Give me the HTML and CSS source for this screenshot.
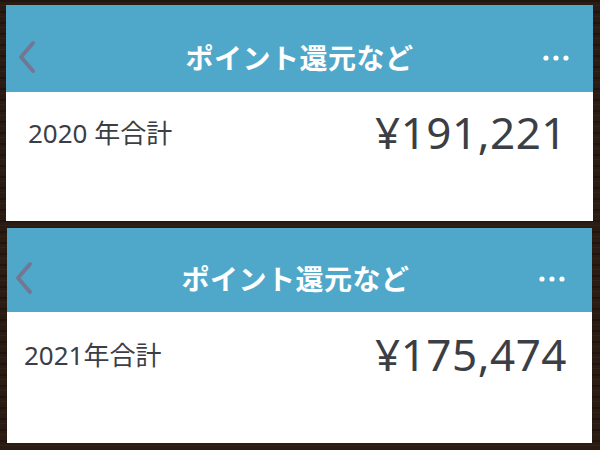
FILE: index.html
```html
<!DOCTYPE html>
<html lang="ja">
<head>
    <meta charset="UTF-8">
    <meta name="viewport" content="width=device-width, initial-scale=1.0">
    <title>ポイント還元など</title>
    <link rel="stylesheet" href="styles.css">
</head>
<body>

    <!-- 2020年 -->
    <section class="panel panel-top">
        <header class="barre">
            <svg class="retour" width="20" height="34" viewBox="0 0 20 34">
                <polyline points="16,3 4,17 16,31" fill="none" stroke="#727894" stroke-width="4" stroke-linecap="round" stroke-linejoin="round"/>
            </svg>
            <h1 class="titre">ポイント還元など</h1>
            <svg class="menu" width="26" height="8" viewBox="0 0 26 8">
                <circle cx="3" cy="4" r="2.6" fill="#fff"/>
                <circle cx="13" cy="4" r="2.6" fill="#fff"/>
                <circle cx="23" cy="4" r="2.6" fill="#fff"/>
            </svg>
        </header>
        <div class="contenu">
            <span class="libelle">2020 年合計</span>
            <span class="montant">¥191,221</span>
        </div>
    </section>

    <!-- 2021年 -->
    <section class="panel panel-bas">
        <header class="barre">
            <svg class="retour" width="20" height="34" viewBox="0 0 20 34">
                <polyline points="16,3 4,17 16,31" fill="none" stroke="#727894" stroke-width="4" stroke-linecap="round" stroke-linejoin="round"/>
            </svg>
            <h1 class="titre">ポイント還元など</h1>
            <svg class="menu" width="26" height="8" viewBox="0 0 26 8">
                <circle cx="3" cy="4" r="2.6" fill="#fff"/>
                <circle cx="13" cy="4" r="2.6" fill="#fff"/>
                <circle cx="23" cy="4" r="2.6" fill="#fff"/>
            </svg>
        </header>
        <div class="contenu">
            <span class="libelle">2021年合計</span>
            <span class="montant">¥175,474</span>
        </div>
    </section>

</body>
</html>
```

FILE: styles.css
```css
html, body {
    height: 100%;
}
body {
    margin: 0;
    padding: 5px 0 0 0;
    box-sizing: border-box;
    font-family: "Noto Sans CJK JP", "Noto Sans", sans-serif;
    background-color: #2a1b13;
    background-image: repeating-linear-gradient(180deg, rgba(0, 0, 0, 0.25) 0 2px, transparent 2px 5px, rgba(90, 60, 40, 0.2) 5px 6px, transparent 6px 11px);
    display: flex;
    flex-direction: column;
    gap: 7px;
}

.panel {
    background-color: #ffffff;
    display: flex;
    flex-direction: column;
}
.panel-top {
    margin-left: 6px;
    width: 587px;
    height: 216px;
}
.panel-bas {
    margin-left: 7px;
    width: 585px;
    height: 215px;
}

.barre {
    box-sizing: border-box;
    background-color: #4fa8c9;
    display: grid;
    grid-template-columns: 1fr auto 1fr;
    align-items: center;
    padding: 16px 11px 0 11px;
}
.panel-top .barre {
    height: 87px;
}
.panel-top .menu {
    margin-right: 13px;
}
.panel-bas .barre {
    height: 84px;
    padding-left: 7px;
    padding-right: 15px;
}
.panel-bas .menu {
    margin-right: 12px;
}
.titre {
    margin: 0;
    color: #ffffff;
    font-size: 28px;
    font-weight: bold;
    letter-spacing: 0.5px;
}
.menu {
    justify-self: end;
    margin-top: 2px;
}

.contenu {
    display: flex;
    justify-content: space-between;
    align-items: center;
    color: #3b3e44;
    font-family: "Noto Sans", "Noto Sans CJK JP", sans-serif;
    padding: 10px 26px 0 22px;
}
.panel-bas .contenu {
    padding-left: 17px;
    padding-right: 25px;
    padding-top: 12px;
}
.libelle {
    font-size: 26px;
}
.montant {
    font-size: 44px;
    letter-spacing: 0.5px;
}
```
